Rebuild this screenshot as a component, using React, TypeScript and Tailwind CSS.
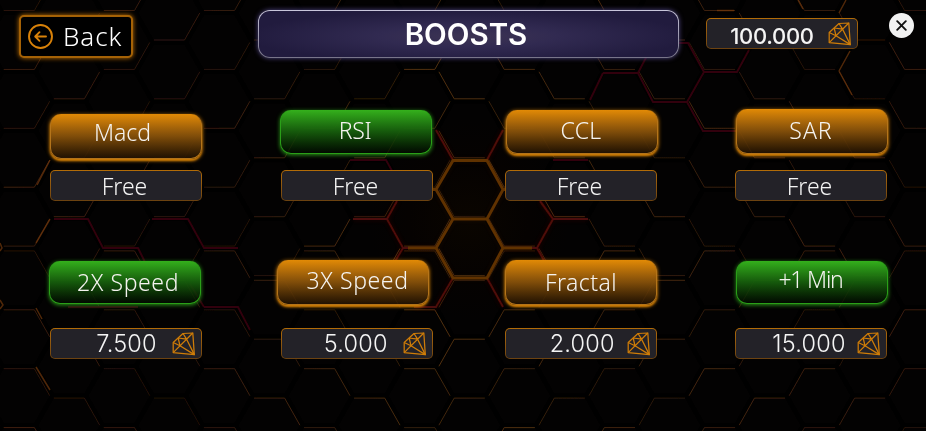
import React from "react";

const FONT = "font-['Noto_Sans','Open_Sans',sans-serif]";

const HEX_W = 50.05;
const HEX_H = 58.9;

type Pt = [number, number];

const toPath = (pts: Pt[]) => "M" + pts.map((p) => `${p[0].toFixed(1)} ${p[1].toFixed(1)}`).join("L");

function corners(cx: number, cy: number, inset: number): Pt[] {
  const rx = 33.4 - inset * 1.15;
  const ry = HEX_H / 2 - inset;
  return [
    [cx - rx / 2, cy - ry],
    [cx + rx / 2, cy - ry],
    [cx + rx, cy],
    [cx + rx / 2, cy + ry],
    [cx - rx / 2, cy + ry],
    [cx - rx, cy],
  ];
}

const cells: { cx: number; cy: number; i: number; j: number }[] = [];
for (let i = -10; i <= 10; i++) {
  for (let j = -5; j <= 5; j++) {
    cells.push({ cx: 469.5 + i * HEX_W, cy: 189.6 + j * HEX_H + (i % 2 !== 0 ? HEX_H / 2 : 0), i, j });
  }
}

function rim(cx: number, cy: number): Pt[] {
  const c = corners(cx, cy, 2.4);
  const left = cx < 460;
  if (cy < 262) return left ? [c[4], c[3], c[2]] : [c[3], c[4], c[5]];
  return left ? [c[0], c[1], c[2]] : [c[1], c[0], c[5]];
}

const redLines = [
  "M436 130L453 160M503 130L487 160",
  "M353 219H387L403 248H436M387 219L397 201M403 248L394 263",
  "M540 201L553 219L537 248H503M553 219H588M537 248L546 264",
  "M453 278L436 307H414M487 278L503 307",
];
const dimRedLines = [
  "M350 160H386L402 189M553 160H588",
  "M677 43H688L704 72H737L749 50M603 73H638L653 102H687L704 72M603 73L590 100M638 73L650 50M687 102L703 131H737",
  "M54 219H88L103 248H138L148 268M152 219H188L204 248H238M204 307H238L250 330M204 307L190 284M68 307H104L138 307",
];

function HexBackground() {
  return (
    <svg className="absolute inset-0 h-full w-full" viewBox="0 0 926 431" fill="none" aria-hidden="true">
      <defs>
        <radialGradient id="core" cx="469" cy="220" r="100" gradientUnits="userSpaceOnUse">
          <stop offset="0" stopColor="#0a0500" />
          <stop offset="0.6" stopColor="#050201" />
          <stop offset="1" stopColor="#030202" />
        </radialGradient>
        <linearGradient id="rimColor" x1="0" y1="0" x2="926" y2="0" gradientUnits="userSpaceOnUse">
          <stop offset="0" stopColor="#42200f" />
          <stop offset="0.2" stopColor="#32180e" />
          <stop offset="0.45" stopColor="#52300f" />
          <stop offset="0.65" stopColor="#472810" />
          <stop offset="1" stopColor="#3b1c0f" />
        </linearGradient>
        <filter id="soft" x="-20%" y="-20%" width="140%" height="140%">
          <feGaussianBlur stdDeviation="2" />
        </filter>
        <filter id="fine" x="-20%" y="-20%" width="140%" height="140%">
          <feGaussianBlur stdDeviation="0.5" />
        </filter>
      </defs>
      <rect width="926" height="431" fill="url(#core)" />
      {cells.map(({ cx, cy, i, j }) => (
        <path key={`c${i}_${j}`} d={toPath(corners(cx, cy, 0)) + "Z"} stroke="#000000" strokeWidth="4" />
      ))}
      <g stroke="url(#rimColor)" strokeWidth="1" filter="url(#fine)">
        {cells.map(({ cx, cy, i, j }) => (
          <path key={`r${i}_${j}`} d={toPath(rim(cx, cy))} opacity={0.6 + (((i * 7 + j * 3) % 5) + 5) % 5 * 0.1} />
        ))}
      </g>
      <g stroke="#b00c08" strokeWidth="4" opacity="0.12" filter="url(#soft)">
        {redLines.map((d) => (
          <path key={d} d={d} />
        ))}
      </g>
      <g stroke="#4c0907" strokeWidth="2.2" filter="url(#fine)">
        {redLines.map((d) => (
          <path key={d} d={d} />
        ))}
      </g>
      <g stroke="#30060a" strokeWidth="2" filter="url(#fine)">
        {dimRedLines.map((d) => (
          <path key={d} d={d} />
        ))}
      </g>
      <g stroke="#8a4200" strokeWidth="5" opacity="0.1" filter="url(#soft)">
        <path d="M453 160.5H487L503 189.6L487 219H453L436 189.6ZM453 219L436 248L453 278H487L503 248L487 219" />
      </g>
      <g stroke="#603003" strokeWidth="3" filter="url(#fine)">
        <path d="M453 160.5H487L503 189.6L487 219H453L436 189.6ZM453 219L436 248L453 278H487L503 248L487 219M436 248H408M503 248H532M436 189.6H430M503 189.6H508" />
      </g>
      <g stroke="#7b3d10" strokeWidth="1.5" opacity="0.65" filter="url(#fine)">
        <path d="M36 243L50 219M36 308L42 319M0 243L2 248L0 251M0 300L3 305L0 309M36 367L50 390M37 185L50 160M798 0L803 9M717 10.500H734M839 71L850 51M839 71L852 95M839 13L846 0" />
      </g>
    </svg>
  );
}

function DiamondIcon() {
  return (
    <svg className="h-6 w-6 shrink-0" viewBox="0 0 24 24" fill="none" stroke="#cf7d08" strokeWidth="1.25" strokeLinejoin="round" aria-hidden="true">
      <path d="M1.200 10.500L11 1.500L20.800 1L22.300 22.600L1.200 20.600Z" />
      <path d="M1.200 20.600L20.800 1M6.200 6L8 13.800M6.200 6L14.600 7.200M1.200 10.500L8 13.800L22.300 22.600L14.600 7.200L11 1.500" />
    </svg>
  );
}

type BoxProps = { text: string; gem?: boolean; className: string };

function ValueBox({ text, gem, className }: BoxProps) {
  return (
    <div className="flex h-[31px] w-[152px] shrink-0 rounded-[5px] bg-gradient-to-b from-[#b36c07] to-[#6b4210] p-[1.3px]">
      <div className="flex flex-1 items-center rounded-[4px] bg-[#232228]">
        <span className={`flex-1 whitespace-nowrap leading-6 text-[#f4f4f4] ${gem ? "text-right font-['Inter','Noto_Sans',sans-serif]" : "text-center"} ${className}`}>{text}</span>
        {gem && (
          <span className="mr-[5px] flex">
            <DiamondIcon />
          </span>
        )}
      </div>
    </div>
  );
}

type Boost = {
  name: string;
  green?: boolean;
  place: string;
  label: string;
  price: string;
  gem?: boolean;
  priceStyle: string;
};

function BoostCard({ b }: { b: Boost }) {
  const tone = b.green
    ? "bg-gradient-to-b from-[#34b01c] via-[#165c0c]/95 to-[#020a01]/70 border-[#2a9f18] shadow-[0_1px_4px_#2b9a18]"
    : "bg-gradient-to-b from-[#e28a05] via-[#85500a]/95 to-[#241302]/80 border-[#b4741a] shadow-[0_1px_4px_#e08a08,0_2px_2px_#a86304]";
  return (
    <div className={`flex w-[152px] flex-col justify-between ${b.gem ? "h-[99px]" : "h-[92px]"}`}>
      <button className={`flex w-[152px] shrink-0 items-start justify-center rounded-[11px] border border-t-0 bg-origin-border ${tone} ${b.place}`}>
        <span className={`whitespace-nowrap text-[23px] font-[350] leading-6 text-[#f5f3f0] ${b.label}`}>{b.name}</span>
      </button>
      <ValueBox text={b.price} gem={b.gem} className={b.priceStyle} />
    </div>
  );
}

const free = "text-[23px] font-[350] pr-[3px]";
const cost = "text-[23.5px] font-[350] tracking-[0.2px]";

const rowOne: Boost[] = [
  { name: "Macd", place: "mt-[5px] h-[45px]", label: "mt-[6px] mr-[7px]", price: "Free", priceStyle: free },
  { name: "RSI", green: true, place: "mt-px -ml-px h-[44px]", label: "mt-[8px] mr-[2px] tracking-[-0.3px]", price: "Free", priceStyle: free },
  { name: "CCL", place: "mt-px ml-px h-[44px]", label: "mt-[8px] mr-[2px] tracking-[0.3px]", price: "Free", priceStyle: free },
  { name: "SAR", place: "ml-px h-[45px]", label: "mt-[9px] mr-[2px] tracking-[1px]", price: "Free", priceStyle: free },
];

const rowTwo: Boost[] = [
  { name: "2X Speed", green: true, place: "mt-px -ml-px h-[43px]", label: "mt-[9px] ml-[6px] tracking-[0.6px]", price: "7.500", gem: true, priceStyle: cost + " pr-[15px]" },
  { name: "3X Speed", place: "-ml-[4px] h-[45px]", label: "mt-[8px] ml-[9px] tracking-[0.6px]", price: "5.000", gem: true, priceStyle: cost + " pr-[15px]" },
  { name: "Fractal", place: "h-[45px]", label: "mt-[10px] tracking-[0.4px]", price: "2.000", gem: true, priceStyle: cost + " pr-[12px]" },
  { name: "+1 Min", green: true, place: "mt-px ml-px h-[43px]", label: "mt-[6px] mr-[3px] tracking-[-1.2px]", price: "15.000", gem: true, priceStyle: cost + " pr-[11px]" },
];

function BoostRow({ items }: { items: Boost[] }) {
  return (
    <div className="grid grid-cols-[231px_224px_230px_152px]">
      {items.map((b) => (
        <BoostCard key={b.name} b={b} />
      ))}
    </div>
  );
}

export default function App() {
  return (
    <div className={`relative h-[431px] w-[926px] overflow-hidden bg-black ${FONT}`}>
      <HexBackground />
      <div className="relative flex h-full flex-col">
        <header className="flex h-[109px] items-start">
          <button className="ml-[19px] mt-[15px] flex h-[43px] w-[114px] items-center rounded-[5px] border-2 border-[#a56206] bg-black pl-[7px] shadow-[0_0_5px_#c47204]">
            <svg className="h-[25px] w-[25px] shrink-0" viewBox="0 0 25 25" fill="none" stroke="#d98209" strokeWidth="1.9" aria-hidden="true">
              <circle cx="12.500" cy="12.500" r="11.500" />
              <path d="M18 12.500H7.500M11.500 8.200L7.200 12.500L11.500 16.800" strokeLinecap="round" strokeLinejoin="round" />
            </svg>
            <span className="-mt-px ml-[10px] text-[26px] font-[350] leading-8 tracking-[0.9px] text-white">Back</span>
          </button>
          <h1 className="ml-[125px] mt-[10px] flex h-[48px] w-[421px] justify-center rounded-[12px] bg-gradient-to-b from-[#c9c6dc] to-[#777489] p-[1.3px] shadow-[0_0_5px_#514787]">
            <span className="flex flex-1 justify-center rounded-[11px] bg-[#211b3e] bg-[radial-gradient(ellipse_at_50%_55%,#3d3453_0%,#312a51_30%,#211b3e_75%)] pt-[5px] pr-[5px] font-['Inter','Noto_Sans',sans-serif] text-[29.500px] font-semibold leading-9 text-white">
              BOOSTS
            </span>
          </h1>
          <div className="ml-[27px] mt-[18px]">
            <ValueBox text="100.000" gem className="text-[22px] font-medium pr-[14px] pt-[4px] tracking-[-0.3px]" />
          </div>
          <button className="ml-[31px] mt-[13px] flex h-[25px] w-[25px] items-center justify-center rounded-full bg-[#f2f2f2]" aria-label="Close">
            <svg className="h-[11px] w-[11px]" viewBox="0 0 11 11" stroke="#111" strokeWidth="1.9" strokeLinecap="round" aria-hidden="true">
              <path d="M1.200 1.200L9.800 9.800M9.800 1.200L1.200 9.800" />
            </svg>
          </button>
        </header>
        <main className="flex flex-col gap-[59px] pl-[50px]">
          <BoostRow items={rowOne} />
          <BoostRow items={rowTwo} />
        </main>
      </div>
    </div>
  );
}
